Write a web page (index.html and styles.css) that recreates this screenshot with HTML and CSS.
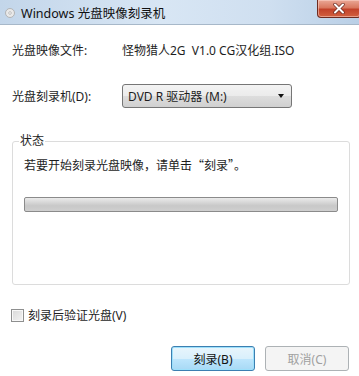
FILE: index.html
```html
<!DOCTYPE html>
<html>
<head>
  <title>Windows 光盘映像刻录机</title>
  <link rel="stylesheet" href="styles.css">
</head>
<body>
  <div class="window">
    <div class="titlebar">
      <svg class="app-icon" width="10" height="10" viewBox="0 0 10 10">
        <circle cx="5" cy="5" r="4.5" fill="#e9e9e9" stroke="#a8a8a8" stroke-width="0.8"/>
        <circle cx="5" cy="5" r="1.3" fill="#ffffff" stroke="#9a9a9a" stroke-width="0.6"/>
      </svg>
      <span class="title">Windows 光盘映像刻录机</span>
      <div class="close">
        <svg width="14" height="11" viewBox="0 0 14 11">
          <path d="M3 1.5 L11 9.5 M11 1.5 L3 9.5" stroke="#6b2a20" stroke-width="3.4" stroke-linecap="round"/>
          <path d="M3 1.5 L11 9.5 M11 1.5 L3 9.5" stroke="#ffffff" stroke-width="2" stroke-linecap="round"/>
        </svg>
      </div>
    </div>

    <div class="content">
      <div class="row first">
        <span class="label">光盘映像文件:</span>
        <span class="value">怪物猎人2G&nbsp; V1.0 CG汉化组.ISO</span>
      </div>
      <div class="row second">
        <span class="label">光盘刻录机(D):</span>
        <div class="select">
          <span>DVD R 驱动器 (M:)</span>
          <span class="arrow"></span>
        </div>
      </div>

      <fieldset class="status">
        <legend>状态</legend>
        <p class="message">若要开始刻录光盘映像，请单击“刻录”。</p>
        <div class="progress"></div>
      </fieldset>

      <label class="check">
        <span class="checkbox"></span>
        <span>刻录后验证光盘(V)</span>
      </label>

      <div class="buttons">
        <button class="btn primary">刻录(B)</button>
        <button class="btn disabled">取消(C)</button>
      </div>
    </div>
  </div>
</body>
</html>
```

FILE: styles.css
```css
body {
  margin: 0;
  padding: 0;
  background-color: #ffffff;
  font-family: "Noto Sans", "Noto Sans CJK SC", sans-serif;
  font-size: 12px;
  color: #1e1e1e;
}

.window {
  width: 359px;
  height: 376px;
  overflow: hidden;
  background-color: #ffffff;
}

/* title bar */
.titlebar {
  height: 24px;
  display: flex;
  align-items: center;
  border-bottom: 1px solid #a7b8c9;
  background: linear-gradient(to right, #c3d6ea, #d8e6f4 45%, #cfdff0 75%, #b9cfe6);
}

.app-icon {
  margin-left: 5px;
  margin-top: 2px;
}

.title {
  margin-left: 6px;
  font-size: 12.5px;
  color: #111;
  flex: 1;
}

.close {
  align-self: flex-start;
  width: 42px;
  height: 17px;
  margin-right: -2px;
  display: flex;
  align-items: center;
  justify-content: center;
  border: 1px solid #6e2b20;
  border-top: none;
  border-radius: 0 0 4px 4px;
  background: linear-gradient(to bottom, #eaa897 0%, #d9785f 45%, #c2422a 55%, #d2603f 100%);
  box-shadow: inset 0 0 0 1px rgba(255, 220, 210, 0.5);
}

/* content */
.content {
  padding: 0 10px 0 12px;
}

.row {
  display: flex;
  align-items: center;
}

.row .label {
  width: 110px;
}

.row.first {
  height: 20px;
  margin-top: 15px;
}

.row.second {
  height: 24px;
  margin-top: 24px;
}

.select {
  width: 156px;
  height: 22px;
  display: flex;
  align-items: center;
  justify-content: space-between;
  padding: 0 7px 0 5px;
  box-sizing: content-box;
  border: 1px solid #767676;
  border-radius: 3px;
  background: linear-gradient(to bottom, #f3f3f3 0%, #ebebeb 50%, #dddddd 51%, #d0d0d0 100%);
}

.select .arrow {
  width: 0;
  height: 0;
  border-left: 3.5px solid transparent;
  border-right: 3.5px solid transparent;
  border-top: 4px solid #111;
}

/* status group */
.status {
  margin: 25px 0 0 0;
  padding: 0 11px 72px 11px;
  border: 1px solid #dcdcdc;
  border-radius: 3px;
  width: 314px;
}

.status legend {
  padding: 0 1px;
  margin-left: -5px;
  line-height: 16px;
}

.message {
  margin: 8px 0 0 0;
  line-height: 16px;
  font-family: "Noto Sans CJK SC", sans-serif;
}

.progress {
  margin-top: 24px;
  height: 13px;
  border: 1px solid #8b8b8b;
  border-radius: 2px;
  background: linear-gradient(to bottom, #ebebeb 0%, #d6d6d6 35%, #c8c8c8 60%, #cfcfcf 100%);
}

/* checkbox */
.check {
  display: flex;
  align-items: center;
  height: 16px;
  margin-top: 22px;
  margin-left: -1px;
}

.checkbox {
  width: 11px;
  height: 11px;
  border: 1px solid #8e8f8f;
  background: linear-gradient(135deg, #d8d8d8, #f4f4f4);
  box-shadow: inset 0 0 0 1px #f8f8f8;
  margin-right: 4px;
}

/* buttons */
.buttons {
  display: flex;
  justify-content: flex-end;
  gap: 10px;
  margin-top: 23px;
}

.btn {
  width: 84px;
  height: 25px;
  font-family: "Noto Sans", "Noto Sans CJK SC", sans-serif;
  font-size: 12px;
  border-radius: 3px;
  padding: 0;
}

.btn.primary {
  border: 1px solid #3c7fb1;
  background: linear-gradient(to bottom, #e8f5fc 0%, #d9f0fc 50%, #bee6fd 51%, #a7d9f5 100%);
  box-shadow: inset 0 0 0 1px #9de0fb;
  color: #111;
}

.btn.disabled {
  border: 1px solid #adb2b5;
  background: #f4f4f4;
  color: #a0a0a0;
}
```
